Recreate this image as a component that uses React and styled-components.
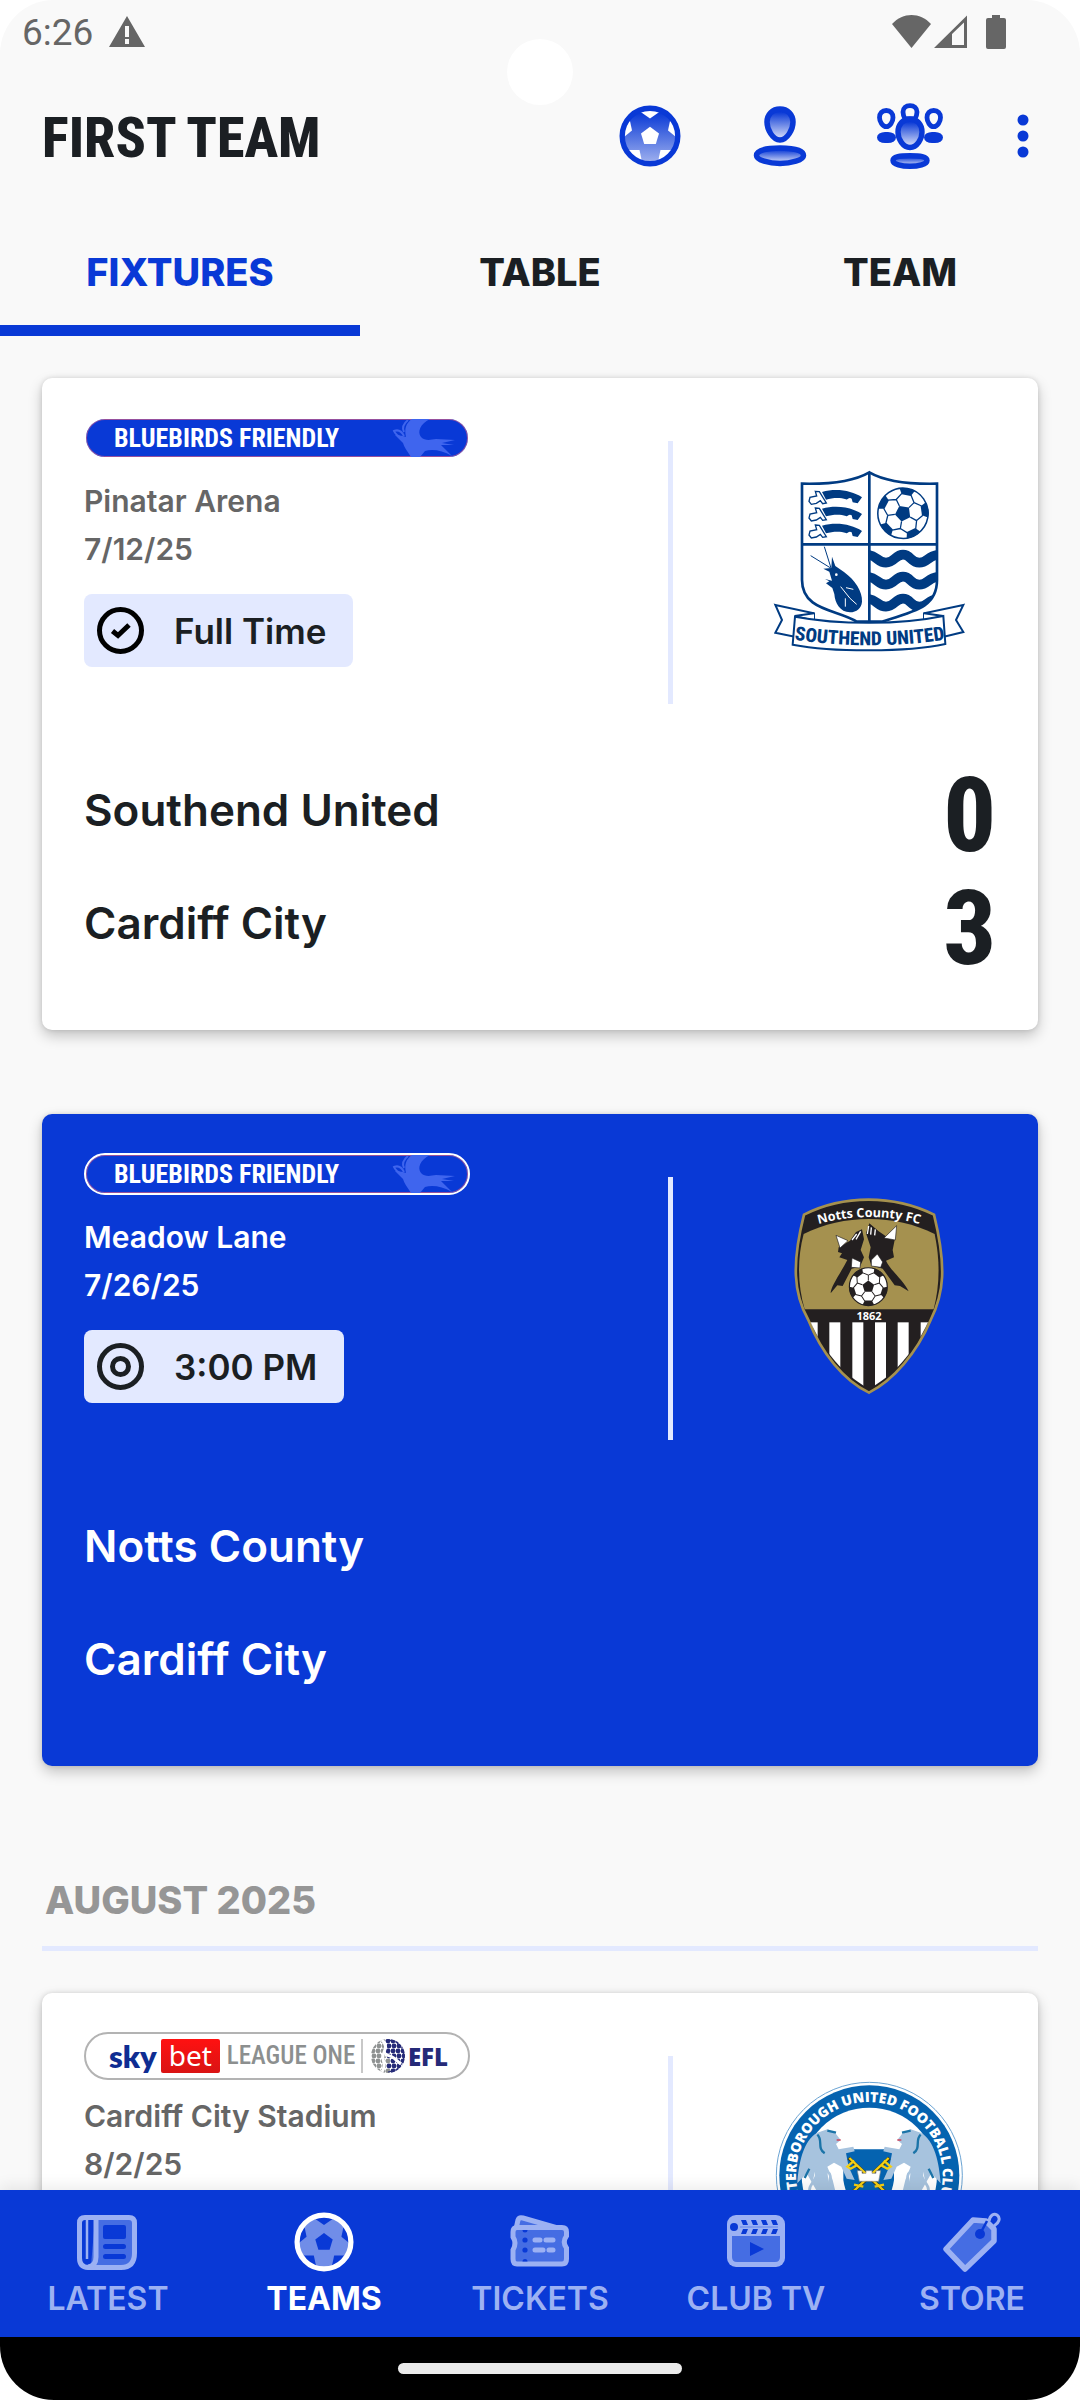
import { useState } from "react";
import styled, { createGlobalStyle, css } from "styled-components";

const BLUE = "#0939d6";
const INK = "#1b1f23";
const PALE = "#e3e9ff";
const TEXT = `"Inter", "Liberation Sans", sans-serif`;
const DISPLAY = `"Roboto Condensed", "Roboto", sans-serif`;

const GlobalStyle = createGlobalStyle`
  * {
    box-sizing: border-box;
  }

  body {
    margin: 0;
    background: #fff;
    color: ${INK};
    font-family: ${TEXT};
  }

  h1, h2, p {
    margin: 0;
  }

  button {
    border: none;
    background: none;
    padding: 0;
    font: inherit;
    color: inherit;
    cursor: pointer;
  }

  svg {
    display: block;
  }
`;

const Screen = styled.div`
  position: relative;
  display: flex;
  flex-direction: column;
  height: 100vh;
  overflow: hidden;
  border-radius: 54px;
  background: #f9f9f9;
`;

const StatusBar = styled.div`
  display: flex;
  align-items: center;
  height: 56px;
  padding: 8px 74px 0 22px;
  color: #666;
  font-family: "Roboto", sans-serif;
  font-size: 37px;
`;

const Clock = styled.span`
  flex: 0 0 auto;
  margin-right: 16px;
`;

const StatusIcons = styled.div`
  display: flex;
  align-items: center;
  margin-left: auto;
`;

const Camera = styled.div`
  position: absolute;
  top: 39px;
  left: 50%;
  width: 66px;
  height: 66px;
  margin-left: -33px;
  border-radius: 50%;
  background: #fff;
`;

const AppBar = styled.header`
  display: flex;
  align-items: center;
  height: 163px;
  padding: 0 10px 0 42px;
`;

const Title = styled.h1`
  flex: 1;
  font-family: ${DISPLAY};
  font-size: 56px;
  font-weight: 800;
  line-height: 60px;
`;

const IconButton = styled.button`
  display: flex;
  align-items: center;
  justify-content: center;
  width: ${({ $slim }) => ($slim ? 95 : 130)}px;
  height: 100px;
  margin-bottom: 3px;
`;

const TabList = styled.div`
  display: flex;
`;

const Tab = styled.button`
  flex: 1;
  height: 117px;
  border-bottom: 11px solid ${({ $active }) => ($active ? BLUE : "transparent")};
  color: ${({ $active }) => ($active ? BLUE : INK)};
  font-size: 38px;
  font-weight: 800;
`;

const Feed = styled.main`
  flex: 1;
  min-height: 0;
  overflow: hidden;
  padding: 42px 42px 0;
`;

const MonthHeading = styled.h2`
  margin-bottom: 42px;
  padding: 26px 3px 22px;
  border-bottom: 5px solid ${PALE};
  color: #969696;
  font-size: 38px;
  font-weight: 800;
  line-height: 48px;
`;

const CardBox = styled.article`
  height: 652px;
  margin-bottom: 84px;
  padding: 39px 42px 0;
  border-radius: 10px;
  background: ${({ $next }) => ($next ? BLUE : "#fff")};
  color: ${({ $next }) => ($next ? "#fff" : INK)};
  box-shadow: 0 6px 14px rgba(0, 0, 0, 0.22), 0 0 5px rgba(0, 0, 0, 0.12);
`;

const CardTop = styled.div`
  display: grid;
  grid-template-columns: 1fr 5px 323px;
`;

const Info = styled.div`
  display: flex;
  flex-direction: column;
  align-items: flex-start;
`;

const BadgeSlot = styled.div`
  height: 48px;
  margin-bottom: 12px;
`;

const Meta = styled.p`
  color: ${({ $next }) => ($next ? "#fff" : "#666")};
  font-size: 30px;
  font-weight: 600;
  line-height: 48px;
`;

const StatusChip = styled.div`
  display: flex;
  align-items: center;
  gap: 30px;
  height: 73px;
  margin-top: 21px;
  padding: 0 27px 0 13px;
  border-radius: 8px;
  background: ${PALE};
  color: ${INK};
  font-size: 35px;
  font-weight: 600;
`;

const Divider = styled.div`
  height: 263px;
  margin-top: 24px;
  background: ${PALE};
`;

const Crest = styled.div`
  display: flex;
  justify-content: flex-end;
  padding: 43px 27px 0 0;
`;

const TeamRow = styled.div`
  display: flex;
  align-items: center;
  justify-content: space-between;
  height: 113px;
  font-size: 44px;
  font-weight: 600;
`;

const Teams = styled.div`
  margin-top: 49px;
`;

const Score = styled.span`
  padding-top: 12px;
  font-family: ${DISPLAY};
  font-size: 104px;
  font-weight: 800;
  line-height: 113px;
`;

const FriendlyPill = styled.div`
  display: flex;
  align-items: center;
  justify-content: space-between;
  width: 386px;
  height: 42px;
  padding: 0 12px 0 28px;
  border: 2px solid #fff;
  border-radius: 21px;
  background: ${BLUE};
  box-shadow: inset 0 0 0 1px #96509e;
  color: #fff;
  font-family: ${DISPLAY};
  font-size: 26px;
  font-weight: 700;
  white-space: nowrap;
`;

const LeaguePill = styled.div`
  display: flex;
  align-items: center;
  width: 386px;
  height: 48px;
  padding: 0 20px 0 23px;
  border: 2px solid #b3b3b3;
  border-radius: 24px;
  background: #fff;
  white-space: nowrap;
`;

const Sky = styled.span`
  color: #0f2d92;
  font-family: "Lato", sans-serif;
  font-size: 31px;
  font-weight: 800;
  line-height: 34px;
`;

const Bet = styled.span`
  width: 59px;
  height: 34px;
  margin-left: 4px;
  border-radius: 2px;
  background: linear-gradient(#f11, #d91414);
  color: #fff;
  font-family: "Noto Sans", sans-serif;
  font-size: 28px;
  line-height: 32px;
  text-align: center;
`;

const LeagueName = styled.span`
  flex: 1;
  margin-left: 7px;
  border-right: 2px solid #c8c8c8;
  color: #8c8f8f;
  font-family: ${DISPLAY};
  font-size: 25px;
  font-weight: 500;
  line-height: 34px;
`;

const Efl = styled.span`
  margin-left: 3px;
  color: #252a78;
  font-family: "Open Sans", sans-serif;
  font-size: 24px;
  font-weight: 800;
`;

const Globe = styled.svg`
  margin-left: 8px;
`;

const BottomNav = styled.nav`
  position: relative;
  display: flex;
  height: 147px;
  background: ${BLUE};
  box-shadow: 0 -4px 14px rgba(0, 0, 0, 0.08);
`;

const NavItem = styled.a`
  flex: 1;
  display: flex;
  flex-direction: column;
  align-items: center;
  padding-top: 22px;
  color: #9cb1f3;
  font-size: 32px;
  font-weight: 600;
  line-height: 40px;
  text-decoration: none;

  svg {
    margin-bottom: 7px;
  }

  ${({ $active }) =>
    $active &&
    css`
      color: #fff;
      font-weight: 700;
    `}
`;

const GestureBar = styled.div`
  display: flex;
  justify-content: center;
  height: 63px;
  padding-top: 26px;
  background: #000;

  span {
    width: 284px;
    height: 11px;
    border-radius: 6px;
    background: #ebebeb;
  }
`;

const WarningIcon = () => (
  <svg width="36" height="32" viewBox="0 0 36 32">
    <path fill="#666" fillRule="evenodd" d="M18 0 36 31H0ZM16 10v11h4V10Zm0 13v5h4v-5Z" />
  </svg>
);

const SignalIcons = () => (
  <svg width="114" height="34" viewBox="0 0 114 34" fill="#666">
    <path d="M0 9C11-3 28-3 39 9L19.500 33Z" />
    <path fillRule="evenodd" d="M42 33 75 .5V33ZM60 19V30H72V7.500Z" />
    <path d="M100 0h8v3h4a2 2 0 0 1 2 2v27a2 2 0 0 1-2 2H96a2 2 0 0 1-2-2V5a2 2 0 0 1 2-2h4Z" />
  </svg>
);

const Ball = ({ id, size, ring, top, bottom, patch }) => (
  <svg width={size} height={size} viewBox="-31 -31 62 62">
    <defs>
      <linearGradient id={id} x1="0" y1="0" x2="0" y2="1">
        <stop offset="0.050" stopColor={top} />
        <stop offset="1" stopColor={bottom} />
      </linearGradient>
      <clipPath id={`${id}-clip`}>
        <circle r="26" />
      </clipPath>
    </defs>
    <circle r="26" fill={`url(#${id})`} />
    <g fill={patch} clipPath={`url(#${id}-clip)`}>
      <path d="M0-9.300 9-2.500 5.800 8H-5.800L-9-2.500Z" />
      <path d="M-10-24.500 0-17.500 10-24.500V-31H-10Z" />
      <path d="M-20-15-18-5.500-26 1-31-10Z" />
      <path d="M20-15 18-5.500 26 1 31-10Z" />
      <path d="M-24 14H-10.500L-7.500 28H-24Z" />
      <path d="M24 14H10.500L7.500 28H24Z" />
    </g>
    <circle r="27.800" fill="none" stroke={ring} strokeWidth="5.400" />
  </svg>
);

const Fade = ({ id }) => (
  <linearGradient id={id} x1="0" y1="0" x2="0" y2="1">
    <stop offset="0.100" stopColor={BLUE} />
    <stop offset="1" stopColor="#e4e8fa" />
  </linearGradient>
);

const PersonIcon = () => (
  <svg width="62" height="62" viewBox="0 0 62 62" stroke={BLUE} strokeWidth="5.500" fill="url(#person)">
    <defs>
      <Fade id="person" />
    </defs>
    <path d="M31 4C38.500 4 44 9.500 44 17 44 24 38.500 35 31 35S18 24 18 17C18 9.500 23.500 4 31 4Z" />
    <path d="M31 43C42 43 54.500 45 54.500 50.500 54.500 55 42 58.500 31 58.500S7.500 55 7.500 50.500C7.500 45 20 43 31 43Z" />
  </svg>
);

const GroupIcon = () => (
  <svg width="66" height="66" viewBox="0 0 66 66" stroke={BLUE} strokeWidth="4.800">
    <defs>
      <Fade id="group" />
    </defs>
    <path fill="#f9f9f9" d="M28 16C26.500 13 26 11 26 9 26 5 29 2.600 33 2.600S40 5 40 9C40 11 39.500 13 38 16Z" />
    <path fill="none" d="M9.300 7.500C13.500 7.500 16 10 16 14.500 16 18.500 13 23.700 9.300 23.700S2.500 18.500 2.500 14.500C2.500 10 5 7.500 9.300 7.500Z" />
    <path fill="none" d="M56.700 7.500C61 7.500 63.500 10 63.500 14.500 63.500 18.500 60.500 23.700 56.700 23.700S50 18.500 50 14.500C50 10 52.500 7.500 56.700 7.500Z" />
    <rect x="0" y="29" width="19" height="11" rx="8" ry="5.500" fill={BLUE} stroke="none" />
    <rect x="47" y="29" width="19" height="11" rx="8" ry="5.500" fill={BLUE} stroke="none" />
    <path fill="url(#group)" strokeWidth="5.400" d="M33 16C40 16 45 21.500 45 29 45 36 40 44.500 33 44.500S21 36 21 29C21 21.500 26 16 33 16Z" />
    <path fill="url(#group)" strokeWidth="5.400" d="M33 52.800C43 52.800 50 53.500 50 57.500 50 61.500 41 63.300 33 63.300S16 61.500 16 57.500C16 53.500 23 52.800 33 52.800Z" />
  </svg>
);

const DotsIcon = () => (
  <svg width="12" height="44" viewBox="0 0 12 44" fill={BLUE}>
    <circle cx="6" cy="6" r="5.500" />
    <circle cx="6" cy="22" r="5.500" />
    <circle cx="6" cy="38" r="5.500" />
  </svg>
);

const CheckCircle = () => (
  <svg width="47" height="47" viewBox="0 0 47 47" fill="none" stroke="#000" strokeWidth="5">
    <circle cx="23.500" cy="23.500" r="21" />
    <path d="M15.500 24 21 28.500 32 18" />
  </svg>
);

const TargetCircle = () => (
  <svg width="47" height="47" viewBox="0 0 47 47" fill="none" stroke={INK} strokeWidth="5">
    <circle cx="23.500" cy="23.500" r="21" />
    <circle cx="23.500" cy="23.500" r="8" />
  </svg>
);

const Bluebird = () => (
  <svg width="64" height="38" viewBox="0 0 64 38" fill="#3f65ee">
    <path d="M20 0H38C28 5 25 13 29 18 33 22 38 21 44 20L63 21 50 24 62 26 49 26 60 37C50 31 40 30 33 32L28 38H19C15 32 12 28 11 24L3 16C8 16 11 17 14 18 12 10 14 4 20 0Z" />
    <path fill="none" stroke="#3f65ee" strokeWidth="2" d="M12 20C8 18 4 17 2 12 7 10 10 13 12 17M16 1C11 5 10 9 12 13" />
  </svg>
);

const NewsIcon = () => (
  <svg width="62" height="60" viewBox="2 0 62 60">
    <path fill="#456de3" d="M20 6H57V46Q57 54 46 54H16Z" />
    <g fill="none" stroke="#9cb1f3" strokeWidth="5">
      <path d="M9 5.500H53Q58.500 5.500 58.500 11V41Q58.500 55.500 45 55.500H12Q3.500 55 3.500 46V11Q3.500 5.500 9 5.500Z" transform="translate(1 0)" />
      <path d="M21 6V45Q21 54 13 55" />
      <path d="M12 8V47" strokeWidth="2.500" />
    </g>
    <g fill={BLUE}>
      <rect x="28" y="13" width="23" height="14" rx="2" />
      <rect x="28" y="32" width="23" height="5" rx="2.500" />
      <rect x="28" y="42" width="23" height="5" rx="2.500" />
    </g>
  </svg>
);

const TicketIcon = () => (
  <svg width="62" height="60" viewBox="0 0 62 60">
    <path fill="#456de3" stroke="#9cb1f3" strokeWidth="5" d="M7 17 9 8Q10 5 14 6L52 17Z" />
    <path fill="#456de3" stroke="#9cb1f3" strokeWidth="5" d="M8 15.500H53Q57.500 15.500 57.500 20V24Q53 30 57.500 36V47Q57.500 52 53 52H8Q4 52 4 47V38Q8 31 4 25V20Q4 15.500 8 15.500Z" />
    <g fill={BLUE}>
      <circle cx="16" cy="28" r="2.600" />
      <circle cx="16" cy="38" r="2.600" />
      <path d="M13.500 18H18.500A2.500 2.500 0 0 1 13.500 18ZM13.500 49.500A2.500 2.500 0 0 1 18.500 49.500Z" />
    </g>
    <path stroke="#9cb1f3" strokeWidth="5" strokeLinecap="round" d="M26 28H31M37 28H44M26 38H34M40 38H44" />
  </svg>
);

const ClubTvIcon = () => (
  <svg width="60" height="60" viewBox="0 0 60 60">
    <rect x="1" y="3" width="58" height="52" rx="9" fill="#9cb1f3" />
    <path fill="#456de3" d="M6 24H54V45Q54 50 49 50H11Q6 50 6 45Z" />
    <g fill={BLUE}>
      <path d="M24 30 38 37 24 44Z" />
      <circle cx="8" cy="15" r="4" />
      <path d="M15 8h5l2 5h-5ZM25 8h5l2 5h-5ZM35 8h5l2 5h-5ZM45 8h5l2 5h-5ZM17 17h5l-2 5h-5ZM27 17h5l-2 5h-5ZM37 17h5l-2 5h-5ZM47 17h5l-2 5h-5Z" />
    </g>
    <path stroke="#6385ea" strokeWidth="1" d="M14 15H52" />
  </svg>
);

const StoreIcon = () => (
  <svg width="60" height="60" viewBox="0 0 60 60">
    <path fill="#456de3" stroke="#9cb1f3" strokeWidth="5.500" strokeLinejoin="round" d="M4 37 31 8 44 9 52 17 52 29 23 57Z" />
    <circle cx="38" cy="22" r="5" fill={BLUE} />
    <path fill="none" stroke={BLUE} strokeWidth="2.500" d="M38 22 45 9" />
    <path fill="none" stroke="#9cb1f3" strokeWidth="3" d="M47 9C48 3 52 1 55 3 59 6 57 11 52 14" />
  </svg>
);

const EflGlobe = () => {
  const dots = [];
  for (let row = 0; row < 7; row++) {
    for (let col = 0; col < 7; col++) {
      dots.push([col * 5 + 2 + (row % 2), row * 5 + 2]);
    }
  }
  return (
    <Globe width="34" height="34" viewBox="0 0 34 34">
      <defs>
        <clipPath id="globe">
          <circle cx="17" cy="17" r="17" />
        </clipPath>
      </defs>
      <g clipPath="url(#globe)">
        {dots.map(([x, y]) => (
          <circle key={`${x}-${y}`} cx={x} cy={y} r="2.400" fill={x + (y < 14 ? 4 : 0) > 17 ? "#252a78" : "#8f9292"} />
        ))}
        <path fill="none" stroke="#fff" strokeWidth="3" d="M10 0C20 8 10 14 12 20S14 30 10 34M14 16C24 16 26 24 32 26" />
      </g>
      <circle cx="17" cy="17" r="16" fill="none" stroke="#252a78" strokeWidth="1" strokeDasharray="50 51" strokeDashoffset="25" />
    </Globe>
  );
};

/* Classic football: a centre pentagon with five more around the rim */
const CrestBall = ({ x, y, r, colour, turn = 0 }) => {
  const spokes = [0, 72, 144, 216, 288];
  return (
    <g transform={`translate(${x} ${y}) scale(${r / 50}) rotate(${turn})`}>
      <circle r="49" fill="#fff" stroke={colour} strokeWidth="3" />
      <path fill={colour} d="M0-16 15-5 9.500 13H-9.500L-15-5Z" />
      {spokes.map((a) => (
        <g key={a} transform={`rotate(${a})`}>
          <path fill={colour} d="M-15-47Q0-52 15-47L9-36H-9Z" transform="rotate(36)" />
          <path fill="none" stroke={colour} strokeWidth="2.500" d="M0-16V-30M0-30-15-36M0-30 15-36" />
        </g>
      ))}
    </g>
  );
};

const SouthendCrest = () => {
  const navy = "#003b82";
  return (
    <svg width="200" height="200" viewBox="87 60 600 600" role="img" aria-label="Southend United">
      <defs>
        <clipPath id="southend-shield">
          <path d="M388 313H591V420C591 500 530 515 425 545H388Z" />
        </clipPath>
        <path id="southend-arc" d="M118 592Q388 640 660 592" />
      </defs>
      <path fill="#fff" stroke={navy} strokeWidth="8" d="M186 131C270 133 340 125 388 97 436 125 506 133 591 131V420C591 500 530 512 425 545H350C290 508 186 512 186 420Z" />
      <path stroke={navy} strokeWidth="8" d="M388 97V545M186 313H591" />
      {[0, 50, 101].map((dy) => (
        <g key={dy} transform={`translate(0 ${dy})`}>
          <path fill={navy} d="M246 156C290 144 335 152 366 172L353 190 338 187 335 176C326 170 322 182 318 178 300 172 276 174 258 179Z" />
          <path fill="#fff" stroke={navy} strokeWidth="4" d="M226 154 238 155 259 189 248 191 241 182 229 190 214 193 207 184 210 172 230 168Z" />
        </g>
      ))}
      <CrestBall x={489} y={220} r={77} colour={navy} turn={190} />
      <g clipPath="url(#southend-shield)" fill="none" stroke={navy} strokeWidth="29">
        {[0, 66, 132].map((dy) => (
          <path key={dy} transform={`translate(0 ${dy})`} d="M380 344C410 344 412 368 438 368S465 344 489 344 512 368 538 368 565 344 600 344" />
        ))}
      </g>
      <path fill={navy} d="M276 350 286 378 312 396C345 420 368 455 366 485 364 506 350 516 330 517 300 516 285 490 283 462L277 444 258 430 268 424 255 417 276 422 268 395 250 386 274 384Z" />
      <path fill="none" stroke={navy} strokeWidth="3" d="M272 384 212 347M273 384 253 320" />
      <path fill="none" stroke="#fff" strokeWidth="3" d="M302 440 330 475 350 493M318 443 340 448M316 475V500" />
      <circle cx="289" cy="404" r="4" fill="#fff" />
      <g fill="#fff" stroke={navy} strokeWidth="6">
        <path d="M106 495 222 520V560L164 590 106 578 126 540Z" />
        <path d="M670 495 552 520V560L612 590 670 576 648 540Z" />
        <path d="M222 520 164 528 222 542M552 520 610 528 552 542" />
        <path d="M165 530C300 555 480 555 610 528L616 612C500 637 280 637 158 614Z" />
      </g>
      <text fill={navy} fontFamily="Roboto Condensed, Roboto, sans-serif" fontWeight="800" fontSize="58" textAnchor="middle">
        <textPath href="#southend-arc" startOffset="50%">
          SOUTHEND UNITED
        </textPath>
      </text>
    </svg>
  );
};

const NottsCrest = () => {
  const shield = "M132 134C250 74 400 74 522 134 560 290 552 370 512 450 470 550 400 630 327 668 250 630 185 550 145 450 100 370 95 280 132 134Z";
  return (
    <svg width="200" height="200" viewBox="27 78 600 600" role="img" aria-label="Notts County">
      <defs>
        <clipPath id="notts-shield">
          <path d="M140 140H515L540 300 506 452C464 546 400 616 327 656 254 616 190 546 150 452L116 300Z" />
        </clipPath>
        <path id="notts-arc" d="M132 176Q327 106 522 176" />
      </defs>
      <path d={shield} fill="#231f20" stroke="#a5914f" strokeWidth="8" />
      <path fill="#a5914f" d="M131 192C250 132 405 132 524 192 542 280 538 350 521 418H134C114 350 110 270 131 192Z" />
      <text fill="#fff" fontFamily="Open Sans, sans-serif" fontWeight="700" fontSize="38" textAnchor="middle">
        <textPath href="#notts-arc" startOffset="50%">
          Notts County FC
        </textPath>
      </text>
      <g fill="#231f20">
        <path d="M236 232 270 212 288 186 306 178 312 208 302 240 312 262 300 290 275 296 248 348 232 346 212 370C212 350 240 312 262 270L238 262 246 250 234 246Z" />
        <path d="M318 190 328 160 356 184 380 200 404 210 398 240 402 262 378 272C390 300 430 330 446 364L420 348 404 346 368 296 334 286 326 262 332 232Z" />
      </g>
      <path fill="#fff" stroke="#231f20" strokeWidth="2" d="M228 196 264 212 240 234ZM410 167 406 210 372 204ZM276 264 302 276 300 294 274 292ZM352 252 368 276 362 292 334 288 334 270Z" />
      <path stroke="#fff" strokeWidth="4" d="M276 210 290 192M288 208 302 184M322 192 326 168M332 194 334 172M344 196 346 178" />
      <CrestBall x={325} y={350} r={58} colour="#231f20" />
      <text x="327" y="450" fill="#fff" fontFamily="Open Sans, sans-serif" fontWeight="700" fontSize="33" textAnchor="middle">
        1862
      </text>
      <g fill="#fff" clipPath="url(#notts-shield)">
        {[140, 208, 277, 345, 413, 482].map((x) => (
          <rect key={x} x={x} y="457" width="33" height="210" />
        ))}
      </g>
    </svg>
  );
};

const Griffin = ({ flip }) => (
  <g transform={flip ? "matrix(-1 0 0 1 774 0)" : undefined}>
    <path fill="#a7c3de" d="M262 448 288 462 302 480 288 492 296 508 340 500 344 514 318 520 326 560 344 600 320 596 304 560 282 548 262 560 278 600 290 650H240L200 580 172 610C176 550 190 480 232 458Z" />
    <path fill="none" stroke="#1b74a8" strokeWidth="7" d="M232 464C250 480 230 505 254 520M262 452 288 458M208 566 194 594" />
    <path fill="#fff" stroke="#a7c3de" strokeWidth="8" d="M226 570C240 600 200 610 210 640M262 575C285 590 255 610 270 640" />
    <path stroke="#d6334a" strokeWidth="4" d="M290 480H302" />
  </g>
);

const PeterboroughCrest = () => (
  <svg width="200" height="200" viewBox="87 285 600 600" role="img" aria-label="Peterborough United">
    <defs>
      <path id="posh-arc" d="M388 806A220 220 0 0 1 388 366A220 220 0 0 1 388 806" />
    </defs>
    <circle cx="388" cy="586" r="279" fill="#fff" stroke="#6aa3d3" strokeWidth="3" />
    <circle cx="388" cy="586" r="270" fill="#0563b0" />
    <circle cx="388" cy="586" r="203" fill="#fff" />
    <text fill="#fff" fontFamily="Open Sans, sans-serif" fontWeight="800" fontSize="42" textAnchor="middle">
      <textPath href="#posh-arc" startOffset="50%">
        PETERBOROUGH UNITED FOOTBALL CLUB
      </textPath>
    </text>
    <path fill="#0563b0" d="M310 508H462V600Q450 680 387 710 322 680 310 600Z" />
    <Griffin />
    <Griffin flip />
    <g fill="none" stroke="#3a3a1c" strokeWidth="11">
      <path d="M326 534 440 640M448 534 334 640" />
    </g>
    <g fill="none" stroke="#f5cf12" strokeWidth="7">
      <path d="M328 534 440 640M446 534 334 640M322 560 340 544 350 556 332 566ZM452 560 434 544 424 556 442 566ZM342 614 370 620M432 614 404 620" />
    </g>
    <path fill="#fff" stroke="#888" strokeWidth="2" d="M352 572H366V580H378V572H396V580H408V572H422L416 604H358Z" />
  </svg>
);

const FriendlyBadge = () => (
  <FriendlyPill>
    BLUEBIRDS FRIENDLY
    <Bluebird />
  </FriendlyPill>
);

const LeagueBadge = () => (
  <LeaguePill>
    <Sky>sky</Sky>
    <Bet>bet</Bet>
    <LeagueName>LEAGUE ONE</LeagueName>
    <EflGlobe />
    <Efl>EFL</Efl>
  </LeaguePill>
);

const fixtures = [
  {
    id: 1,
    badge: <FriendlyBadge />,
    crest: <SouthendCrest />,
    venue: "Pinatar Arena",
    date: "7/12/25",
    status: "Full Time",
    finished: true,
    teams: [
      { name: "Southend United", score: 0 },
      { name: "Cardiff City", score: 3 },
    ],
  },
  {
    id: 2,
    badge: <FriendlyBadge />,
    crest: <NottsCrest />,
    venue: "Meadow Lane",
    date: "7/26/25",
    status: "3:00 PM",
    next: true,
    teams: [{ name: "Notts County" }, { name: "Cardiff City" }],
  },
  {
    id: 3,
    month: "AUGUST 2025",
    badge: <LeagueBadge />,
    crest: <PeterboroughCrest />,
    venue: "Cardiff City Stadium",
    date: "8/2/25",
    teams: [],
  },
];

const FixtureCard = ({ fixture }) => {
  const { badge, crest, venue, date, status, finished, next, teams } = fixture;
  return (
    <CardBox $next={next}>
      <CardTop>
        <Info>
          <BadgeSlot>{badge}</BadgeSlot>
          <Meta $next={next}>{venue}</Meta>
          <Meta $next={next}>{date}</Meta>
          {status && (
            <StatusChip>
              {finished ? <CheckCircle /> : <TargetCircle />}
              {status}
            </StatusChip>
          )}
        </Info>
        <Divider />
        <Crest>{crest}</Crest>
      </CardTop>
      <Teams>
        {teams.map((team) => (
          <TeamRow key={team.name}>
            {team.name}
            {team.score !== undefined && <Score>{team.score}</Score>}
          </TeamRow>
        ))}
      </Teams>
    </CardBox>
  );
};

const tabs = ["FIXTURES", "TABLE", "TEAM"];

const navItems = [
  { label: "LATEST", icon: <NewsIcon /> },
  {
    label: "TEAMS",
    icon: <Ball id="nav-ball" size={60} ring="#fff" top="#708de8" bottom="#708de8" patch={BLUE} />,
    active: true,
  },
  { label: "TICKETS", icon: <TicketIcon /> },
  { label: "CLUB TV", icon: <ClubTvIcon /> },
  { label: "STORE", icon: <StoreIcon /> },
];

const App = () => {
  const [activeTab, setActiveTab] = useState("FIXTURES");

  return (
    <>
      <GlobalStyle />
      <Screen>
        <StatusBar>
          <Clock>6:26</Clock>
          <WarningIcon />
          <StatusIcons>
            <SignalIcons />
          </StatusIcons>
        </StatusBar>
        <Camera />
        <AppBar>
          <Title>FIRST TEAM</Title>
          <IconButton aria-label="Matches">
            <Ball id="bar-ball" size={62} ring={BLUE} top={BLUE} bottom="#9dafee" patch="#fff" />
          </IconButton>
          <IconButton aria-label="Player">
            <PersonIcon />
          </IconButton>
          <IconButton aria-label="Squad">
            <GroupIcon />
          </IconButton>
          <IconButton $slim aria-label="More">
            <DotsIcon />
          </IconButton>
        </AppBar>
        <TabList role="tablist">
          {tabs.map((tab) => (
            <Tab
              key={tab}
              role="tab"
              aria-selected={tab === activeTab}
              $active={tab === activeTab}
              onClick={() => setActiveTab(tab)}
            >
              {tab}
            </Tab>
          ))}
        </TabList>
        <Feed>
          {fixtures.map((fixture) => (
            <div key={fixture.id}>
              {fixture.month && <MonthHeading>{fixture.month}</MonthHeading>}
              <FixtureCard fixture={fixture} />
            </div>
          ))}
        </Feed>
        <BottomNav>
          {navItems.map((item) => (
            <NavItem key={item.label} href="#" $active={item.active}>
              {item.icon}
              {item.label}
            </NavItem>
          ))}
        </BottomNav>
        <GestureBar>
          <span />
        </GestureBar>
      </Screen>
    </>
  );
};

export default App;
